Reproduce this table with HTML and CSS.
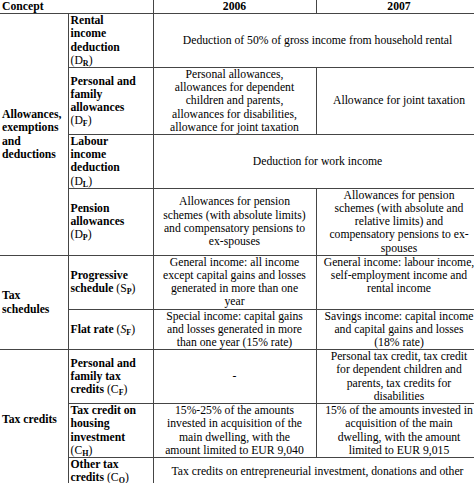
FILE: index.html
```html
<!DOCTYPE html>
<html lang="en">
<head>
<meta charset="utf-8">
<title>Tax concepts 2006 vs 2007</title>
<link rel="stylesheet" href="styles.css">
</head>
<body>
<div class="frame">
<table class="tbl">
<colgroup><col class="c1"><col class="c2"><col class="c3"><col class="c4"></colgroup>
<thead>
<tr class="head"><th colspan="2" class="h-concept">Concept</th><th class="h-year">2006</th><th class="h-year">2007</th></tr>
</thead>
<tbody>
<tr>
<th rowspan="4" class="group">Allowances,<br>exemptions<br>and<br>deductions</th>
<th class="item">Rental<br>income<br>deduction<br><span class="sym">(D<sub>R</sub>)</span></th>
<td colspan="2">Deduction of 50% of gross income from household rental</td>
</tr>
<tr>
<th class="item">Personal and<br>family<br>allowances<br><span class="sym">(D<sub>F</sub>)</span></th>
<td>Personal allowances,<br>allowances for dependent<br>children and parents,<br>allowances for disabilities,<br>allowance for joint taxation</td>
<td>Allowance for joint taxation</td>
</tr>
<tr>
<th class="item">Labour<br>income<br>deduction<br><span class="sym">(D<sub>L</sub>)</span></th>
<td colspan="2">Deduction for work income</td>
</tr>
<tr>
<th class="item">Pension<br>allowances<br><span class="sym">(D<sub>P</sub>)</span></th>
<td>Allowances for pension<br>schemes (with absolute limits)<br>and compensatory pensions to<br>ex-spouses</td>
<td>Allowances for pension<br>schemes (with absolute and<br>relative limits) and<br>compensatory pensions to ex-<br>spouses</td>
</tr>
<tr>
<th rowspan="2" class="group">Tax<br>schedules</th>
<th class="item">Progressive<br>schedule <span class="sym">(S<sub>P</sub>)</span></th>
<td>General income: all income<br>except capital gains and losses<br>generated in more than one<br>year</td>
<td class="top">General income: labour income,<br>self-employment income and<br>rental income</td>
</tr>
<tr>
<th class="item">Flat rate <span class="sym">(<i>S</i><sub>F</sub>)</span></th>
<td>Special income: capital gains<br>and losses generated in more<br>than one year (15% rate)</td>
<td>Savings income: capital income<br>and capital gains and losses<br>(18% rate)</td>
</tr>
<tr>
<th rowspan="3" class="group">Tax credits</th>
<th class="item">Personal and<br>family tax<br>credits <span class="sym">(C<sub>F</sub>)</span></th>
<td>-</td>
<td>Personal tax credit, tax credit<br>for dependent children and<br>parents, tax credits for<br>disabilities</td>
</tr>
<tr>
<th class="item">Tax credit on<br>housing<br>investment<br><span class="sym">(C<sub>H</sub>)</span></th>
<td>15%-25% of the amounts<br>invested in acquisition of the<br>main dwelling, with the<br>amount limited to EUR 9,040</td>
<td>15% of the amounts invested in<br>acquisition of the main<br>dwelling, with the amount<br>limited to EUR 9,015</td>
</tr>
<tr class="last">
<th class="item">Other tax<br>credits <span class="sym">(C<sub>O</sub>)</span></th>
<td colspan="2">Tax credits on entrepreneurial investment, donations and other</td>
</tr>
</tbody>
</table>
</div>
</body>
</html>
```

FILE: styles.css
```css
html, body {
  margin: 0;
  padding: 0;
  background: #ffffff;
  overflow: hidden;
}

.frame {
  width: 474px;
  height: 483px;
  overflow: hidden;
}

.tbl {
  border-collapse: collapse;
  table-layout: fixed;
  width: 482px;
  font-family: "Liberation Serif", "Times New Roman", serif;
  font-size: 11.7px;
  line-height: 13.2px;
  color: #000;
}

.c1 { width: 68px; }
.c2 { width: 85px; }
.c3 { width: 163px; }
.c4 { width: 166px; }

.tbl th,
.tbl td {
  border: 1px solid #454545;
  padding: 0 2px;
  white-space: nowrap;
  vertical-align: middle;
}

.tbl td {
  text-align: center;
  font-weight: normal;
}

.tbl td.top {
  vertical-align: top;
}

.head th {
  border-top: none;
  font-weight: bold;
}

.h-concept {
  text-align: left;
  padding-left: 0;
}

.h-year {
  text-align: center;
}

.tbl th:first-child,
.tbl td:first-child {
  border-left: none;
}

.group {
  text-align: left;
  font-weight: bold;
  padding-left: 0;
}

.item {
  text-align: left;
  font-weight: bold;
  padding-left: 4px;
}

.sym {
  font-weight: normal;
}

.sym sub {
  font-size: 8px;
  line-height: 0;
  vertical-align: -2px;
  font-weight: bold;
}

.last th,
.last td {
  padding-bottom: 4px;
}
```
